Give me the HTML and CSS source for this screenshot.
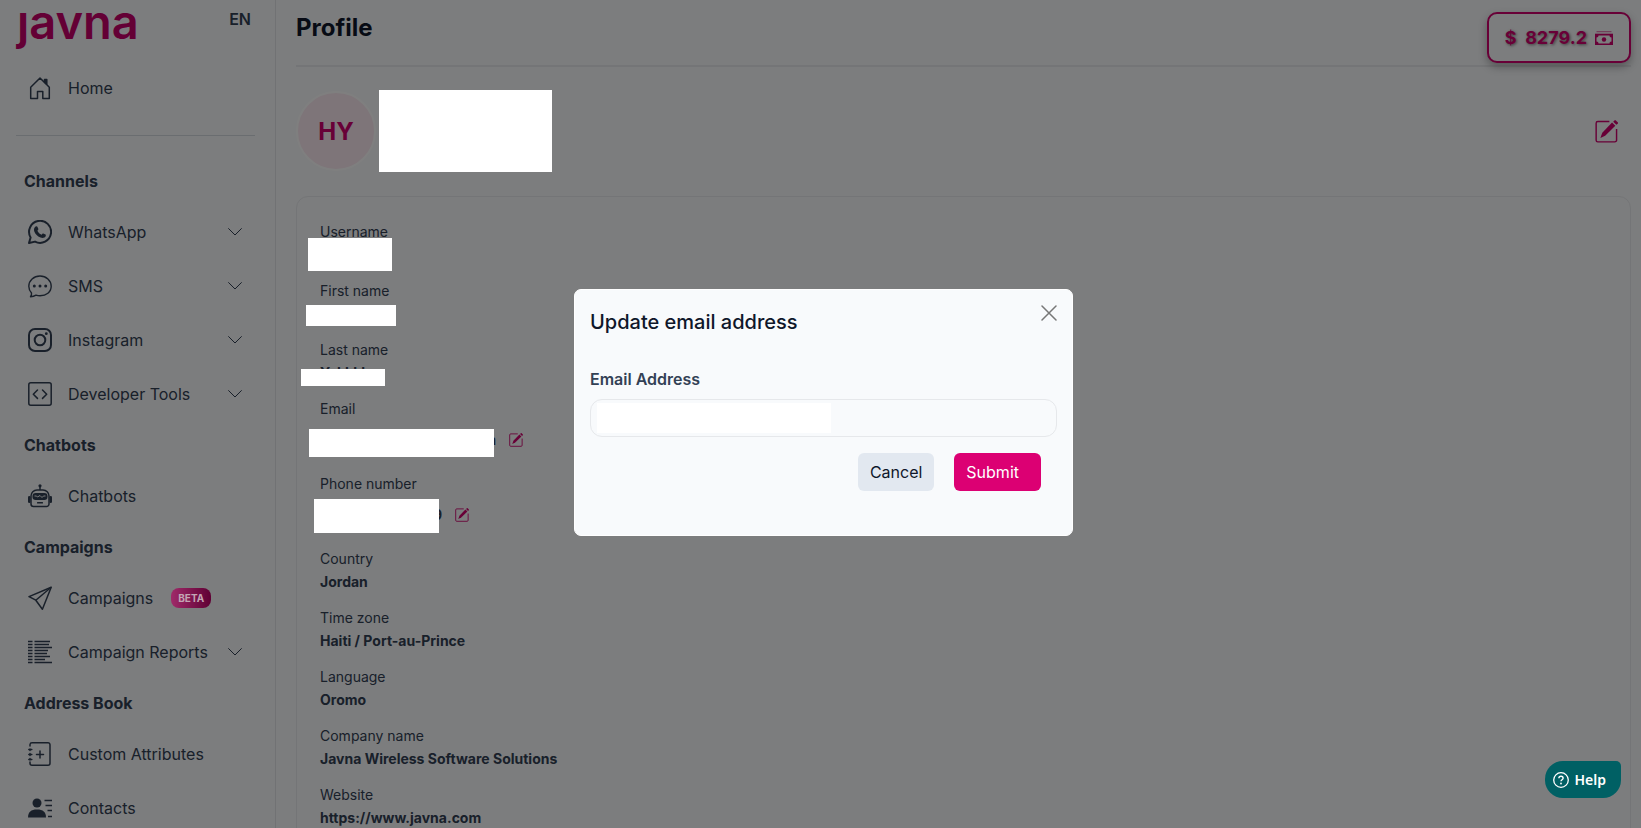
FILE: index.html
```html
<!DOCTYPE html>
<html lang="en">
<head>
    <meta charset="UTF-8">
    <meta name="viewport" content="width=device-width, initial-scale=1.0">
    <title>Javna - Profile</title>
    <link rel="stylesheet" href="styles.css">
</head>
<body>
    <!-- shared icons -->
    <svg class="sprite" aria-hidden="true">
        <symbol id="chevron" viewBox="0 0 16 16">
            <path d="M1.6 4.6 8 11l6.4-6.4" fill="none" stroke="currentColor" stroke-linecap="round" stroke-linejoin="round"/>
        </symbol>
        <symbol id="pencil" viewBox="0 0 24 24">
            <path d="M15 1.5H3A1.8 1.8 0 0 0 1.2 3.300v17.700A1.800 1.800 0 0 0 3 22.800h17.700a1.800 1.800 0 0 0 1.800-1.800V9.500" fill="none" stroke="currentColor" stroke-width="1.500"/>
            <path d="M17.800 2.600l3.400 3.400L10.600 16.400l-5 2.400 2-5.400z" fill="currentColor"/>
            <path d="M19 1.700l1.300-1.300a1 1 0 0 1 1.400 0l2 2a1 1 0 0 1 0 1.400L22.300 5z" fill="currentColor"/>
        </symbol>
    </svg>

    <div class="layout">
        <aside class="sidebar">
            <div class="brand">
                <a href="#" class="logo" aria-label="javna">&#567;avna</a>
                <a href="#" class="lang">EN</a>
            </div>
            <nav>
                <a href="#" class="nav-item">
                    <svg class="icon" viewBox="0 0 24 24" fill="none" stroke="currentColor" stroke-width="1.500" stroke-linejoin="round"><path d="M2.700 22.500V11.200L12 2l9.300 9.200v11.300h-6.500v-7H9.500v7z"/><path d="M16.500 3.500h2.300v4.700l-2.300-2.200z" fill="currentColor"/></svg>
                    <span>Home</span>
                </a>
                <hr>
                <h2>Channels</h2>
                <a href="#" class="nav-item">
                    <svg class="icon" viewBox="0 0 24 24"><path d="M1 23l1.600-5.600A11 11 0 1 1 7 21.600z" fill="none" stroke="currentColor" stroke-width="2" stroke-linejoin="round"/><path d="M7.600 6.500c.700-.500 1.500-.400 1.800.300l.9 2c.2.500.1.900-.9 1.900 1 2 2.200 3.100 4.200 4 .9-1.200 1.200-1.400 1.700-1.200l2.200 1c.5.300.4 1.300 0 2-1 1.500-3 1.800-5 1-3.200-1.300-5-3.200-6.200-6-.7-2-.3-3.900 1.300-5z" fill="currentColor"/></svg>
                    <span>WhatsApp</span>
                    <svg class="chevron"><use href="#chevron"/></svg>
                </a>
                <a href="#" class="nav-item">
                    <svg class="icon" viewBox="0 0 24 24"><path d="M2.500 22.700c1-1.200 1.200-2.200 1-3.700C1.800 17.200.8 15 .8 12.300.8 6.400 5.800 2 12 2s11.200 4.400 11.200 10.300S18.200 21.700 12 21.700c-1.500 0-2.700-.2-4-.600-1.500 1-3.300 1.600-5.500 1.600z" fill="none" stroke="currentColor" stroke-width="1.400" stroke-linejoin="round"/><g fill="currentColor"><circle cx="6.300" cy="12" r="1.500"/><circle cx="12" cy="12" r="1.500"/><circle cx="17.700" cy="12" r="1.500"/></g></svg>
                    <span>SMS</span>
                    <svg class="chevron"><use href="#chevron"/></svg>
                </a>
                <a href="#" class="nav-item">
                    <svg class="icon" viewBox="0 0 24 24" fill="none" stroke="currentColor" stroke-width="2"><rect x="1" y="1" width="22" height="22" rx="6"/><circle cx="12" cy="12" r="5.300"/><circle cx="18.300" cy="5.700" r="1.400" fill="currentColor" stroke="none"/></svg>
                    <span>Instagram</span>
                    <svg class="chevron"><use href="#chevron"/></svg>
                </a>
                <a href="#" class="nav-item">
                    <svg class="icon" viewBox="0 0 24 24" fill="none" stroke="currentColor" stroke-width="1.500" stroke-linecap="round" stroke-linejoin="round"><rect x=".8" y=".8" width="22.400" height="22.400" rx="2"/><path d="M9.500 8 5.300 12.200l4.200 4.200M14.500 8l4.200 4.200-4.200 4.200"/></svg>
                    <span>Developer Tools</span>
                    <svg class="chevron"><use href="#chevron"/></svg>
                </a>
                <h2>Chatbots</h2>
                <a href="#" class="nav-item">
                    <svg class="icon" viewBox="0 0 24 24"><g fill="none" stroke="currentColor" stroke-width="1.500"><path d="M12 6V2.500"/><path d="M3 20V12a6 6 0 0 1 6-6h6a6 6 0 0 1 6 6v8a2.500 2.500 0 0 1-2.500 2.500h-13A2.500 2.500 0 0 1 3 20z"/></g><g fill="currentColor"><circle cx="12" cy="1.800" r="1.600"/><rect x="0" y="12" width="2.500" height="7" rx="1.200"/><rect x="21.500" y="12" width="2.500" height="7" rx="1.200"/><rect x="4.500" y="9" width="15" height="7" rx="3.200"/><rect x="9" y="18" width="6" height="1.600" rx=".5"/></g><path d="M6.500 12h2l1 1 2.500-1.500 2 2 1.500-1.500h2" fill="none" stroke="#f8fafc" stroke-width="1"/></svg>
                    <span>Chatbots</span>
                </a>
                <h2>Campaigns</h2>
                <a href="#" class="nav-item">
                    <svg class="icon" viewBox="0 0 24 24" fill="none" stroke="currentColor" stroke-width="1.500" stroke-linejoin="round"><path d="M23.200 1.200 1 10.600l6.800 3.600 6.600 9z"/><path d="M23.200 1.200 7.800 14.200"/></svg>
                    <span>Campaigns</span>
                    <span class="badge">BETA</span>
                </a>
                <a href="#" class="nav-item">
                    <svg class="icon" viewBox="0 0 24 24" fill="none" stroke="currentColor" stroke-width="1.500"><path d="M0 1.500h4.500M0 4.500h4.500M0 7.500h4.500M0 10.500h4.500M0 13.500h4.500M0 16.500h4.500M0 19.500h4.500M0 22.500h4.500M6.500 1.500H22M6.500 4.500H21M6.500 7.500H24M6.500 10.500H20M6.500 13.500H19M6.500 16.500H22M6.500 19.500H17M6.500 22.500H24"/></svg>
                    <span>Campaign Reports</span>
                    <svg class="chevron"><use href="#chevron"/></svg>
                </a>
                <h2>Address Book</h2>
                <a href="#" class="nav-item">
                    <svg class="icon" viewBox="0 0 24 24" fill="none" stroke="currentColor" stroke-width="1.500" stroke-linecap="round"><path d="M2 4V2.500A2 2 0 0 1 4 .8h16a2 2 0 0 1 2 2v18.400a2 2 0 0 1-2 2H4a2 2 0 0 1-2-2V20"/><path d="M.8 7.500h3M.8 12.500h3M.8 17.500h3M2 7v1.500M2 11.500v2M2 16.500v1.500M12 9v7M8.500 12.500h7"/></svg>
                    <span>Custom Attributes</span>
                </a>
                <a href="#" class="nav-item">
                    <svg class="icon" viewBox="0 0 24 24"><g fill="currentColor"><circle cx="9" cy="7" r="4.500"/><path d="M0 21.500c0-5.500 3-8 9-8s9 2.500 9 8z"/></g><path d="M16.500 4.500H24M17.500 9.500H24M19.500 14.500H24M20 20.500h4" stroke="currentColor" stroke-width="1.500"/></svg>
                    <span>Contacts</span>
                </a>
            </nav>
        </aside>

        <main>
            <header>
                <h1>Profile</h1>
                <div class="balance">
                    <span>$&nbsp; 8279.2</span>
                    <svg viewBox="0 0 18 14"><path d="M1.500.7h15M0 3h18v11H0z" fill="currentColor" stroke="currentColor" stroke-width=".6"/><path d="M3.500 4.500h11c0 1.300.7 2 2 2v4c-1.300 0-2 .7-2 2h-11c0-1.300-.7-2-2-2v-4c1.300 0 2-.7 2-2z" fill="#f8fafc"/><circle cx="9" cy="8.500" r="2.200" fill="currentColor"/></svg>
                </div>
            </header>

            <section class="user">
                <div class="avatar">HY</div>
                <div class="user-info"></div>
                <button class="edit" aria-label="Edit profile"><svg><use href="#pencil"/></svg></button>
            </section>

            <dl class="card">
                <div class="field">
                    <dt>Username</dt>
                    <dd><span class="cover cover-username"></span></dd>
                </div>
                <div class="field">
                    <dt>First name</dt>
                    <dd><span class="cover cover-first"></span></dd>
                </div>
                <div class="field">
                    <dt>Last name</dt>
                    <dd>Yakkkk<span class="cover cover-last"></span></dd>
                </div>
                <div class="field">
                    <dt>Email</dt>
                    <dd class="editable">
                        <span class="email">m</span>
                        <button class="edit small" aria-label="Edit email"><svg><use href="#pencil"/></svg></button>
                        <span class="cover cover-email"></span>
                    </dd>
                </div>
                <div class="field">
                    <dt>Phone number</dt>
                    <dd class="editable">
                        <span class="phone">9</span>
                        <button class="edit small" aria-label="Edit phone number"><svg><use href="#pencil"/></svg></button>
                        <span class="cover cover-phone"></span>
                    </dd>
                </div>
                <div class="field">
                    <dt>Country</dt>
                    <dd>Jordan</dd>
                </div>
                <div class="field">
                    <dt>Time zone</dt>
                    <dd>Haiti / Port-au-Prince</dd>
                </div>
                <div class="field">
                    <dt>Language</dt>
                    <dd>Oromo</dd>
                </div>
                <div class="field">
                    <dt>Company name</dt>
                    <dd>Javna Wireless Software Solutions</dd>
                </div>
                <div class="field">
                    <dt>Website</dt>
                    <dd>https://www.javna.com</dd>
                </div>
            </dl>
        </main>
    </div>

    <div class="backdrop">
        <form class="modal" role="dialog" aria-labelledby="modal-title">
            <div class="modal-header">
                <h2 id="modal-title">Update email address</h2>
                <button type="button" class="close" aria-label="Close">
                    <svg viewBox="0 0 16 16"><path d="M1 1l14 14M15 1L1 15" stroke="currentColor" stroke-width="1.500" stroke-linecap="round"/></svg>
                </button>
            </div>
            <label for="email-input">Email Address</label>
            <div class="input-wrap">
                <input type="email" id="email-input">
                <span class="cover cover-input"></span>
            </div>
            <div class="actions">
                <button type="button" class="btn cancel">Cancel</button>
                <button type="submit" class="btn submit">Submit</button>
            </div>
        </form>
    </div>

    <button class="help">
        <svg viewBox="0 0 16 16" fill="none" stroke="currentColor"><circle cx="8" cy="8" r="7.300" stroke-width="1.300"/><path d="M5.900 6.300c0-1.300.9-2 2.100-2s2.100.8 2.100 1.900c0 1.500-2.100 1.600-2.100 3.100" stroke-width="1.400"/><circle cx="8" cy="11.500" r=".9" fill="currentColor" stroke="none"/></svg>
        Help
    </button>
</body>
</html>
```
FILE: styles.css
```css
* {
    box-sizing: border-box;
}

body {
    margin: 0;
    height: 100vh;
    overflow: hidden;
    background-color: #f8fafc;
    color: #334155;
    font-family: Inter, "Liberation Sans", sans-serif;
    font-size: 16px;
}

a {
    color: inherit;
    text-decoration: none;
}

button {
    font: inherit;
    cursor: pointer;
}

.sprite {
    display: none;
}

.layout {
    display: flex;
    height: 100vh;
}

/* Sidebar */
.sidebar {
    flex: 0 0 276px;
    border-right: 1px solid #e2e4e8;
}

.brand {
    display: flex;
    justify-content: space-between;
    height: 61px;
    padding: 0 24px 0 17px;
}

.logo {
    color: #c8006b;
    font-size: 47px;
    font-weight: 600;
    line-height: 44px;
}

.lang {
    font-weight: 600;
    line-height: 38px;
}

.sidebar hr {
    height: 1px;
    margin: 20px 20px 21px 16px;
    border: 0;
    background-color: #d5dae1;
}

.sidebar h2 {
    margin: 0;
    padding-left: 24px;
    color: #334155;
    font-size: 16px;
    font-weight: 700;
    line-height: 48px;
}

.nav-item {
    display: flex;
    align-items: center;
    gap: 16px;
    height: 54px;
    padding: 0 32px 0 28px;
}

.icon {
    width: 24px;
    height: 24px;
}

.chevron {
    width: 16px;
    height: 16px;
    margin-left: auto;
}

.badge {
    position: relative;
    z-index: 20;
    margin-left: 2px;
    padding: 0 7px;
    border-radius: 8px;
    background: linear-gradient(90deg, #9f2a69, #5f0034);
    color: #c3a5b4;
    font-size: 10px;
    font-weight: 700;
    line-height: 20px;
}

/* Profile page */
main {
    flex: 1;
    min-width: 0;
    overflow: hidden;
    padding: 0 10px 0 20px;
}

header {
    display: flex;
    align-items: flex-start;
    justify-content: space-between;
    height: 67px;
    border-bottom: 2px solid #e9ebee;
}

h1 {
    margin: 0;
    color: #0f172a;
    font-size: 24px;
    font-weight: 700;
    line-height: 56px;
}

.balance {
    display: flex;
    align-items: center;
    gap: 8px;
    height: 51px;
    margin-top: 12px;
    padding: 0 16px;
    border: 2px solid #d0006e;
    border-radius: 10px;
    background-color: #f8fafc;
    box-shadow: 0 4px 8px rgba(0, 0, 0, 0.3);
    color: #d0006e;
    font-size: 18px;
    font-weight: 700;
    text-shadow: 1px 1px 3px rgba(0, 0, 0, 0.5);
}

.balance svg {
    width: 18px;
    height: 14px;
}

.user {
    display: flex;
    align-items: center;
    gap: 3px;
    height: 128px;
    margin-bottom: 1px;
}

.avatar {
    display: flex;
    align-items: center;
    justify-content: center;
    width: 80px;
    height: 80px;
    border: 2px solid #fff;
    border-radius: 50%;
    background-color: #fcebf3;
    color: #d0006e;
    font-size: 24px;
    font-weight: 700;
}

.user-info {
    position: relative;
    z-index: 20;
    width: 173px;
    height: 82px;
    background-color: #fff;
}

.edit {
    padding: 0;
    border: 0;
    background: none;
    color: #d0006e;
    line-height: 0;
}

.edit svg {
    width: 23px;
    height: 23px;
}

.edit.small svg {
    width: 14px;
    height: 14px;
}

.user .edit {
    margin: 0 13px 0 auto;
}

.card {
    display: flex;
    flex-direction: column;
    gap: 13px;
    margin: 0;
    padding: 23px;
    border: 1px solid #e9ebee;
    border-radius: 12px;
    font-size: 14px;
    line-height: 23px;
}

dd {
    position: relative;
    height: 23px;
    margin: 0;
    font-weight: 700;
}

.editable {
    display: flex;
    align-items: center;
    gap: 13px;
    height: 39px;
}

.email,
.phone {
    width: 176px;
    text-align: right;
}

.phone {
    width: 122px;
}

/* White blocks over the private values */
.cover {
    position: absolute;
    z-index: 20;
    background-color: #fff;
}

.cover-username {
    top: -5px;
    left: -12px;
    width: 84px;
    height: 33px;
}

.cover-first {
    top: 3px;
    left: -14px;
    width: 90px;
    height: 21px;
}

.cover-last {
    top: 8px;
    left: -19px;
    width: 84px;
    height: 17px;
}

.cover-email {
    top: 9px;
    left: -11px;
    width: 185px;
    height: 28px;
}

.cover-phone {
    top: 4px;
    left: -6px;
    width: 125px;
    height: 34px;
}

.cover-input {
    top: 4px;
    left: 7px;
    width: 234px;
    height: 30px;
}

/* Modal */
.backdrop {
    position: fixed;
    inset: 0;
    z-index: 10;
    display: flex;
    align-items: center;
    justify-content: center;
    padding: 0 0 4px 6px;
    background-color: rgba(0, 0, 0, 0.5);
}

.modal {
    width: 499px;
    padding: 15px 15px 44px;
    border: 1px solid #fff;
    border-radius: 7px;
    background-color: #f8fafc;
}

.modal-header {
    display: flex;
    justify-content: space-between;
    margin-bottom: 27px;
}

.modal h2 {
    margin: 0;
    color: #0f172a;
    font-size: 20px;
    font-weight: 500;
    line-height: 34px;
}

.close {
    height: 16px;
    padding: 0;
    border: 0;
    background: none;
    color: #777;
    line-height: 0;
}

.close svg {
    width: 16px;
    height: 16px;
}

.modal label {
    display: block;
    margin-bottom: 7px;
    font-weight: 600;
    line-height: 26px;
}

.input-wrap {
    position: relative;
}

.modal input {
    display: block;
    width: 100%;
    height: 38px;
    padding: 0 12px;
    border: 1px solid #e6e8eb;
    border-radius: 12px;
    background-color: #f8fafc;
    font: inherit;
}

.actions {
    display: flex;
    justify-content: flex-end;
    gap: 20px;
    margin: 16px 16px 0 0;
}

.btn {
    height: 38px;
    padding: 0 12px;
    border: 0;
    border-radius: 6px;
}

.cancel {
    background-color: #e2e8f0;
    color: #0f172a;
}

.submit {
    padding-right: 22px;
    background-color: #dc0073;
    color: #fff;
}

/* Help widget */
.help {
    position: fixed;
    right: 20px;
    bottom: 30px;
    z-index: 30;
    display: flex;
    align-items: center;
    gap: 6px;
    height: 37px;
    padding: 0 15px 0 8px;
    border: 0;
    border-radius: 18px 5px 18px 18px;
    background-color: #006064;
    color: #fff;
    font-family: "Noto Sans", sans-serif;
    font-size: 14px;
    font-weight: 600;
}

.help svg {
    width: 16px;
    height: 16px;
}
```
